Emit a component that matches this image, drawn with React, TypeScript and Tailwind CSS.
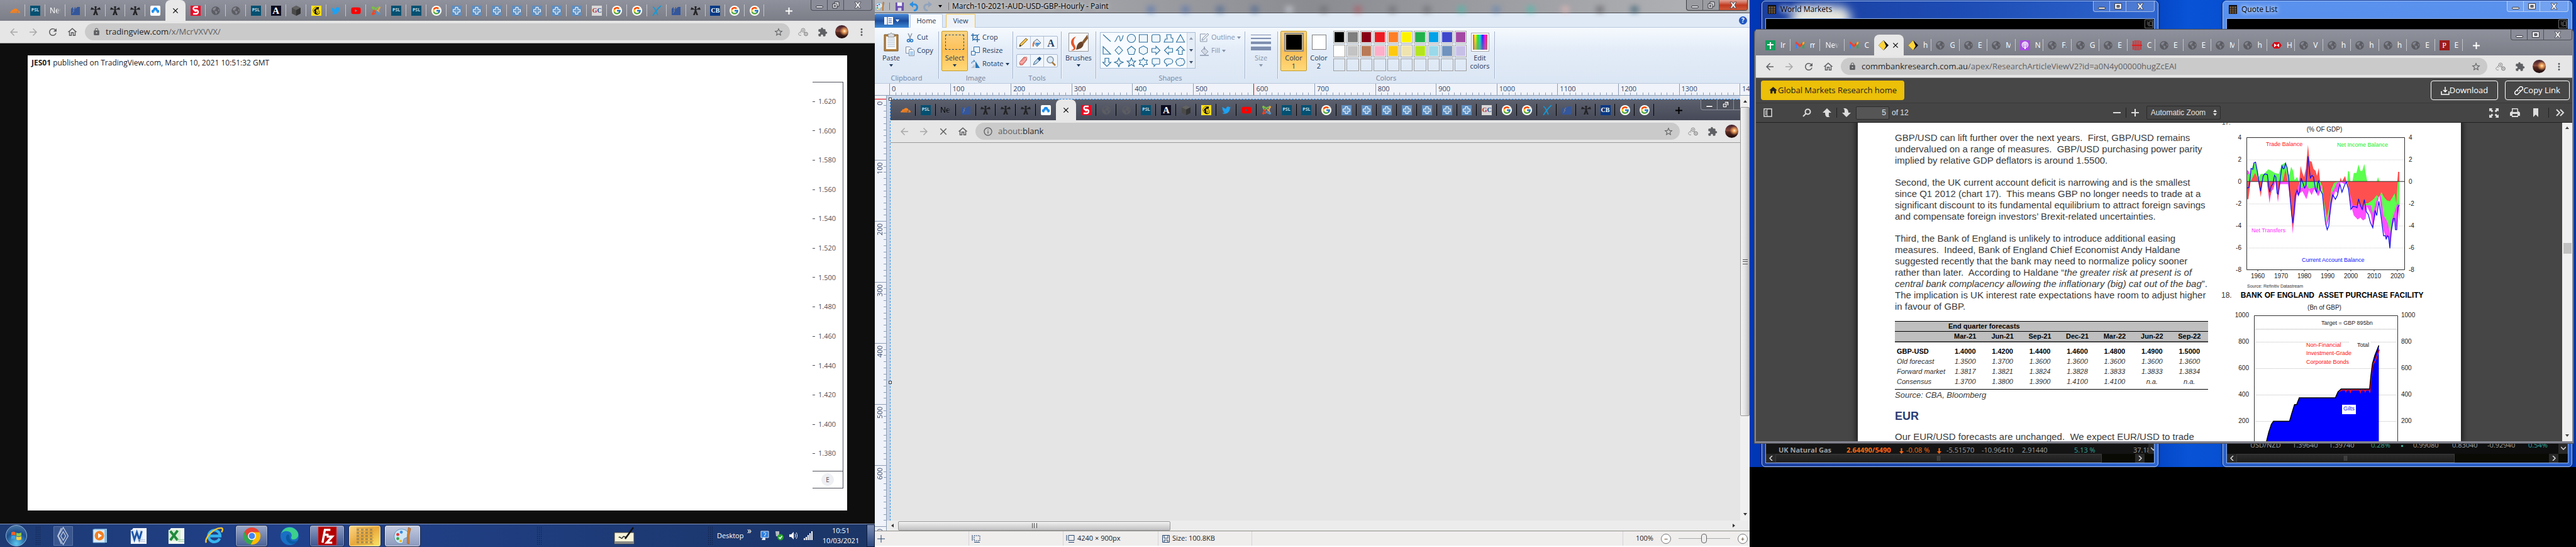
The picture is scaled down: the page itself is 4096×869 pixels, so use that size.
import React from "react";
import {
  MdArrowBack,
  MdArrowForward,
  MdRefresh,
  MdClose,
  MdOutlineHome,
  MdLock,
  MdStarBorder,
  MdExtension,
  MdMoreVert,
  MdInfoOutline,
  MdHome,
} from "react-icons/md";
import { FaTwitter, FaYoutube, FaJoomla, FaMailchimp, FaPodcast, FaGlobeAmericas } from "react-icons/fa";
import { FcGoogle } from "react-icons/fc";
import { SiCloudflare } from "react-icons/si";

const UI = "font-['Open_Sans','Noto_Sans',sans-serif]";

/* ---------- favicons ---------- */

function Favicon({ kind }: { kind: string }) {
  switch (kind) {
    case "cloudflare":
      return <SiCloudflare className="size-4 text-[#f48120]" />;
    case "psl":
      return (
        <span className="flex size-4 items-center justify-center bg-[#045071] text-[7px] font-bold text-[#c9d8e0]">PSL</span>
      );
    case "factory":
      return (
        <svg viewBox="0 0 16 16" className="size-4">
          <path d="M1 15V5l3-3v4l4-4v3l3-3h4v13z" fill="#34569b" />
          <path d="M3 12l3-4h-2l3-4" stroke="#7d8390" fill="none" />
        </svg>
      );
    case "cross":
      return (
        <svg viewBox="0 0 16 16" className="size-4">
          <path d="M6.300 1h3.400L8.800 6l5.700-3.500 1.500 4-6-.3-.8 1.300L12 15H9.200L8 11l-1.200 4H4l2.800-7.500L6 6.200l-6 .3 1.500-4L7.200 6z" fill="#232326" />
        </svg>
      );
    case "cloudup":
      return (
        <span className="flex size-4 items-center justify-center rounded-xs bg-white">
          <svg viewBox="0 0 16 16" className="size-3.5">
            <path d="M4 12a3 3 0 0 1 0-6 4 4 0 0 1 8 0 3 3 0 0 1 0 6h-1L8 8l-3 4z" fill="#1c8df0" />
            <path d="M5 11l3-4 3 4" stroke="#fff" fill="none" />
          </svg>
        </span>
      );
    case "scotia":
      return (
        <svg viewBox="0 0 16 16" className="size-4">
          <path d="M0 0h16v16H0z" fill="#ed0722" />
          <path d="M12 2H7a2.500 2.500 0 0 0 0 5h2a3 3 0 0 1 0 6H4" stroke="#fff" strokeWidth="2.400" fill="none" />
          <circle cx="8" cy="8" r="2" fill="#fff" />
        </svg>
      );
    case "globe":
      return <FaGlobeAmericas className="size-3.5 text-[#5c5d63]" />;
    case "a":
      return (
        <span className="flex size-4 items-center justify-center bg-[#0b0b20] font-['Liberation_Serif',serif] text-[15px] font-bold leading-4 text-white">
          A
        </span>
      );
    case "cube":
      return (
        <svg viewBox="0 0 16 16" className="size-4">
          <path d="M8 0l7 3.500v9L8 16l-7-3.500v-9z" fill="#4b4b4b" />
          <path d="M8 0l7 3.500L8 7 1 3.500z" fill="#626262" />
          <path d="M8 7l7-3.500v9L8 16z" fill="#333" />
        </svg>
      );
    case "chimp":
      return (
        <span className="flex size-4 items-center justify-center bg-[#ffe01b]">
          <FaMailchimp className="size-3.5 text-black" />
        </span>
      );
    case "twitter":
      return <FaTwitter className="size-3.5 text-[#1da1f2]" />;
    case "youtube":
      return <FaYoutube className="size-4 text-[#f00]" />;
    case "joomla":
      return (
        <span className="relative block size-4">
          <FaJoomla className="size-4 text-[#f9a541] [clip-path:polygon(50%_50%,100%_0,100%_100%)]" />
          <FaJoomla className="absolute inset-0 size-4 text-[#7ac143] [clip-path:polygon(0_0,100%_0,50%_50%,0_60%)]" />
          <FaJoomla className="absolute inset-0 size-4 text-[#f44321] [clip-path:polygon(0_40%,50%_50%,50%_100%,0_100%)]" />
          <FaJoomla className="absolute inset-0 size-4 text-[#5091cd] [clip-path:polygon(50%_50%,100%_80%,100%_100%,40%_100%)]" />
        </span>
      );
    case "google":
      return (
        <span className="flex size-4 items-center justify-center rounded-full bg-white">
          <FcGoogle className="size-3.5" />
        </span>
      );
    case "plus":
      return (
        <svg viewBox="0 0 16 16" className="size-4">
          <path d="M0 0h16v16H0z" fill="#5f8dbd" />
          <path d="M6 2.500h4V6h3.500v4H10v3.500H6V10H2.500V6H6z" fill="#6f9bc7" stroke="#fff" />
        </svg>
      );
    case "gc":
      return (
        <span className="flex size-4 items-center justify-center bg-[#d8d8d8] font-['Liberation_Serif',serif] text-[10px] font-bold text-[#c22b35]">
          G<span className="text-[#1f4f86]">C</span>
        </span>
      );
    case "x":
      return (
        <svg viewBox="0 0 16 16" className="size-4">
          <path d="M2 2c4 1 6 10 8 13M15 0C10 4 6 10 2 16" stroke="#1399d6" strokeWidth="1.800" fill="none" />
        </svg>
      );
    case "cb":
      return (
        <span className="flex size-4 items-center justify-center bg-[#0a3a86] font-['Liberation_Serif',serif] text-[10px] font-bold text-white">
          CB
        </span>
      );
    case "sheet":
      return (
        <svg viewBox="0 0 16 16" className="size-4">
          <rect width="16" height="16" rx="1" fill="#149e5c" />
          <path d="M8 3v11M3 7h10" stroke="#fff" strokeWidth="2" />
        </svg>
      );
    case "gmail":
      return (
        <svg viewBox="0 0 16 16" className="size-4">
          <path d="M1 4v9h3V6z" fill="#4285f4" />
          <path d="M15 4v9h-3V6z" fill="#34a853" />
          <path d="M1 3l1-1 6 5 6-5 1 1v2l-7 6-7-6z" fill="#ea4335" />
          <path d="M12 4l2-2 1 1v2l-3 3z" fill="#fbbc04" />
        </svg>
      );
    case "cba":
      return (
        <svg viewBox="0 0 16 16" className="size-4">
          <path d="M8 0l8 8-8 8-8-8z" fill="#000" />
          <path d="M8 0l4 9-4 7-8-8z" fill="#ffd43a" />
        </svg>
      );
    case "podcast":
      return (
        <span className="flex size-4 items-center justify-center bg-[#a84be0]">
          <FaPodcast className="size-3 text-white" />
        </span>
      );
    case "hatch":
      return (
        <svg viewBox="0 0 16 16" className="size-4">
          <path d="M2 1v14M5 0v16M8 0v16M11 0v16M14 1v14M0 8h16" stroke="#f01010" strokeWidth="1.300" />
        </svg>
      );
    case "hsbc":
      return (
        <svg viewBox="0 0 16 16" className="size-4">
          <path d="M4 3h8l4 5-4 5H4L0 8z" fill="#db0011" />
          <path d="M4 5l4 3-4 3zM12 5L8 8l4 3z" fill="#fff" />
        </svg>
      );
    case "pinterest":
      return (
        <span className="flex size-4 items-center justify-center bg-[#9c1c1c] font-['Liberation_Serif',serif] text-[12px] leading-4 text-white">
          P
        </span>
      );
    default:
      return null;
  }
}

/* ---------- shared browser chrome ---------- */

type TabInfo = { icon?: string; text?: string };

function Tab({ tab, active, line, dark }: { tab: TabInfo; active: boolean; line: boolean; dark: boolean }) {
  const wide = Boolean(tab.icon && tab.text);
  return (
    <button
      aria-label={tab.text || tab.icon || "Current tab"}
      className={
        "relative flex h-[33px] min-w-0 flex-1 basis-0 items-center overflow-hidden text-[12px] " +
        (active ? "rounded-t-lg bg-[#e8e8e8] text-black " : dark ? "text-black " : "text-white ") +
        (wide || (active && tab.icon) ? "gap-1 pl-[7px]" : "justify-center")
      }
    >
      {tab.icon && <Favicon kind={tab.icon} />}
      {tab.text && (
        <span
          className={
            wide
              ? "ml-1 w-2 overflow-hidden whitespace-nowrap text-left"
              : "w-[55%] overflow-hidden whitespace-nowrap text-left [mask-image:linear-gradient(90deg,black_60%,transparent)]"
          }
        >
          {tab.text}
        </span>
      )}
      {active && <MdClose className="size-3.5" />}
      {line && <span className={"absolute right-0 top-[7px] h-[19px] w-px " + (dark ? "bg-black" : "bg-[#c4c5cb]")} />}
    </button>
  );
}

function TabGroup({ tabs, active, dark = false }: { tabs: TabInfo[]; active: number; dark?: boolean }) {
  return (
    <>
      {tabs.map((t, i) => (
        <Tab key={i} tab={t} active={i === active} line={i !== active && i !== active - 1} dark={dark} />
      ))}
    </>
  );
}

function RestoreGlyph() {
  return (
    <svg viewBox="0 0 12 12" className="size-3">
      <path d="M4 1h7v7H8v3H1V4h3z" fill="#e4e4e8" stroke="#33343a" />
      <path d="M4 4h4v4M3.500 6.500h2v2h-2z" fill="none" stroke="#33343a" />
    </svg>
  );
}

function MaxGlyph() {
  return (
    <svg viewBox="0 0 12 12" className="size-3">
      <path d="M.5 1.500h11v9H.5z" fill="#e9e9ee" stroke="#3c3e46" />
      <path d="M4 4.500h4v3H4z" fill="#777" stroke="#3c3e46" />
    </svg>
  );
}

function WindowButtons({ tone, restore = false }: { tone: "gray" | "dark" | "paint" | "aero"; restore?: boolean }) {
  const shell =
    tone === "dark"
      ? "border-[#8b8e98] bg-[#50545f] divide-[#8b8e98]"
      : tone === "aero"
        ? "border-white/50 bg-white/15 divide-white/50"
        : tone === "paint"
          ? "border-[#3c3d42] bg-[#9b9ca1] divide-[#5a5b60]"
          : "border-[#4e5058] bg-[#8a8c97] divide-[#4e5058]";
  return (
    <div className={"flex h-[17px] divide-x overflow-hidden rounded-b-sm border border-t-0 " + shell}>
      <button aria-label="Minimize" className="flex w-[26px] items-center justify-center">
        <span className="mt-1.5 h-1 w-3 rounded-xs border border-[#3c3e46] bg-[#e9e9ee]" />
      </button>
      <button aria-label="Maximize" className="flex w-[26px] items-center justify-center">
        {restore ? <RestoreGlyph /> : <MaxGlyph />}
      </button>
      <button
        aria-label="Close"
        className={
          "flex w-[44px] items-center justify-center " +
          (tone === "paint" ? "bg-linear-to-b from-[#e0a498] via-[#c0391f] to-[#cf5a3c]" : "")
        }
      >
        <svg viewBox="0 0 12 12" className="size-3">
          <path d="M1 1h3l2 3 2-3h3L8 6l3 5H8L6 8l-2 3H1l3-5z" fill="#f2f2f4" stroke="#3c3e46" strokeWidth=".8" />
        </svg>
      </button>
    </div>
  );
}

function AddressBar({ stop = false, canBack = false, info = false, children, value }: {
  stop?: boolean;
  canBack?: boolean;
  info?: boolean;
  value: string;
  children: React.ReactNode;
}) {
  return (
    <div className="flex h-[36px] shrink-0 items-center border-b border-[#9a9a9a] bg-[#e6e6e6] px-1.5 text-[#5f6063]">
      <button aria-label="Back" className={"flex w-[31px] justify-center " + (canBack ? "text-[#5f6063]" : "text-[#a9a9a9]")}>
        <MdArrowBack className="size-[18px]" />
      </button>
      <button aria-label="Forward" className="flex w-[31px] justify-center text-[#a9a9a9]">
        <MdArrowForward className="size-[18px]" />
      </button>
      <button aria-label={stop ? "Stop" : "Reload"} className="flex w-[31px] justify-center">
        {stop ? <MdClose className="size-[18px]" /> : <MdRefresh className="size-[18px]" />}
      </button>
      <button aria-label="Home" className="flex w-[31px] justify-center">
        <MdOutlineHome className="size-[18px]" />
      </button>
      <div className="mx-[5px] flex h-[27px] min-w-0 flex-1 items-center rounded-full bg-[#cacaca] pl-3 pr-2.5">
        {info ? <MdInfoOutline className="size-4 shrink-0" /> : <MdLock className="size-[13px] shrink-0" />}
        <a href={value} className="ml-2 flex-1 truncate text-[13px] text-[#5f6063]">
          {children}
        </a>
        <button aria-label="Bookmark this page">
          <MdStarBorder className="size-4" />
        </button>
      </div>
      <button aria-label="Share extension" className="flex w-[31px] justify-center">
        <svg viewBox="0 0 16 16" className="size-4" fill="none" stroke="#8f8f8f">
          <circle cx="8" cy="5" r="3" />
          <circle cx="8" cy="5" r="1" />
          <circle cx="12.500" cy="11" r="2.800" stroke="#6e6e6e" />
          <circle cx="12.500" cy="11" r=".8" />
          <path d="M5 13c-3 1-5-1-4-3s3-2 4 0M3 8l2-2M9 8l2 1" />
        </svg>
      </button>
      <button aria-label="Extensions" className="flex w-[31px] justify-center">
        <MdExtension className="size-4" />
      </button>
      <button aria-label="Profile" className="flex w-[31px] justify-center">
        <span className="size-[21px] rounded-full bg-[radial-gradient(circle_at_70%_45%,#fff3d0_0,#f5a860_12%,transparent_40%),linear-gradient(#3b1c2c,#8a4a3c_45%,#5b2a20_55%,#180a0c)]" />
      </button>
      <button aria-label="Menu" className="flex w-[31px] justify-center">
        <MdMoreVert className="size-[18px]" />
      </button>
    </div>
  );
}

const mainTabs: TabInfo[] = [
  { icon: "cloudflare" }, { icon: "psl" }, { text: "New Tab" }, { icon: "factory" }, { icon: "cross" }, { icon: "cross" },
  { icon: "cross" }, { icon: "cloudup" }, {}, { icon: "scotia" }, { icon: "globe" }, { icon: "globe" }, { icon: "psl" },
  { icon: "a" }, { icon: "cube" }, { icon: "chimp" }, { icon: "twitter" }, { icon: "youtube" }, { icon: "joomla" },
  { icon: "psl" }, { icon: "psl" }, { icon: "google" }, { icon: "plus" }, { icon: "plus" }, { icon: "plus" },
  { icon: "plus" }, { icon: "plus" }, { icon: "plus" }, { icon: "plus" }, { icon: "gc" }, { icon: "google" }, { icon: "google" },
];
const tailTabs: TabInfo[] = [
  { icon: "x" }, { icon: "factory" }, { icon: "cross" }, { icon: "cb" }, { icon: "google" }, { icon: "google" },
];

function ChartBrowserHead({ dark = false, children }: { dark?: boolean; children: React.ReactNode }) {
  return (
    <>
      <div
        className={
          "flex h-[33px] shrink-0 items-start pl-2 " +
          (dark ? "bg-linear-to-b from-[#5c606d] to-[#464a58]" : "bg-linear-to-b from-[#8f919c] to-[#7b7d87]")
        }
      >
        <div className="flex flex-[1020_1_0%]">
          <TabGroup tabs={mainTabs} active={8} dark={dark} />
        </div>
        <div className="flex flex-[186_1_0%]">
          <TabGroup tabs={tailTabs} active={-1} dark={dark} />
        </div>
        <div className="flex w-[176px] justify-between pl-8 pr-1">
          <button aria-label="New tab" className={"mt-2.5 size-[15px] " + (dark ? "text-black" : "text-white")}>
            <svg viewBox="0 0 15 15" className="size-[15px]">
              <path d="M7.500 2v11M2 7.500h11" stroke="currentColor" strokeWidth="2" />
            </svg>
          </button>
          <WindowButtons tone={dark ? "dark" : "gray"} restore />
        </div>
      </div>
      {children}
    </>
  );
}

/* ---------- screen 1 ---------- */

const prices = ["1.620", "1.600", "1.580", "1.560", "1.540", "1.520", "1.500", "1.480", "1.460", "1.440", "1.420", "1.400", "1.380"];

function Grip() {
  return <span className="h-[30px] w-2 shrink-0 bg-[radial-gradient(#0b1533_1px,transparent_1px)] bg-[size:3px_3px]" />;
}

function TaskItem({ label, frame = "", children }: { label: string; frame?: string; children: React.ReactNode }) {
  return (
    <button aria-label={label} className="flex h-full w-[60px] shrink-0 items-center justify-center">
      <span className={"flex h-[35px] items-center justify-center " + frame}>{children}</span>
    </button>
  );
}

function Taskbar() {
  return (
    <footer className="flex h-[37px] shrink-0 items-center border-t border-[#8295bd] bg-linear-to-r from-[#1d3a73] via-[#21418c] via-35% to-[#1b3566] text-white">
      <button aria-label="Start" className="flex w-[52px] justify-center">
        <span className="flex size-[34px] items-center justify-center rounded-full border border-[#8fb4d8] bg-[radial-gradient(circle_at_50%_90%,#5cc8f0,#1d4f8d_55%,#5d86ad)]">
          <svg viewBox="0 0 20 20" className="size-5">
            <path d="M2 5c3-2 5-1 7 0v5c-2-1-4-2-7 0z" fill="#f0602c" />
            <path d="M10 5c3 2 5 1 8 0v5c-3 1-5 2-8 0z" fill="#8fc742" />
            <path d="M2 11c3-2 5-1 7 0v5c-2-1-4-2-7 0z" fill="#3fa0e6" />
            <path d="M10 11c3 2 5 1 8 0v5c-3 1-5 2-8 0z" fill="#fcd03c" />
          </svg>
        </span>
      </button>
      <span className="ml-1 mr-1.5 flex">
        <Grip />
      </span>
      <TaskItem label="Trading platform">
        <svg viewBox="0 0 32 32" className="size-[31px]">
          <path d="M.5.500h31v31H.5z" fill="#3a568f" stroke="#5d77a8" />
          <path d="M16 2l8 14-8 14-8-14zM16 9l-4 7 4 7 4-7zM13 3L7 16l6 13" fill="none" stroke="#b4c3dd" strokeWidth="1.500" />
        </svg>
      </TaskItem>
      <TaskItem label="Media Player">
        <svg viewBox="0 0 26 26" className="size-[26px]">
          <path d="M3 2h20v22H3z" fill="#8fc3ea" />
          <path d="M1 3h19v21H1z" fill="#d9ecf9" stroke="#6aa5d4" />
          <circle cx="11" cy="13" r="7.500" fill="#f28022" />
          <path d="M9 9l6 4-6 4z" fill="#fff" />
        </svg>
      </TaskItem>
      <TaskItem label="Word">
        <svg viewBox="0 0 30 30" className="size-[29px]">
          <path d="M6 2h22v26H2V8z" fill="#f3f6fb" />
          <path d="M2 5h20v18H2z" fill="#dfe9f7" />
          <path d="M4 7l4 14 4-12 4 12 4-14" stroke="#1d56a8" strokeWidth="3" fill="none" />
          <path d="M14 21h12M14 24h12" stroke="#a9bdd9" />
        </svg>
      </TaskItem>
      <TaskItem label="Excel">
        <svg viewBox="0 0 30 30" className="size-[29px]">
          <path d="M6 2h22v26H2V8z" fill="#f1f8f1" />
          <path d="M2 5h20v18H2z" fill="#d6ecd4" />
          <path d="M5 7l12 15M17 6L5 22" stroke="#1f8a3b" strokeWidth="4" fill="none" />
          <path d="M16 21h12M18 24h10" stroke="#8fc493" />
        </svg>
      </TaskItem>
      <TaskItem label="Internet Explorer">
        <svg viewBox="0 0 32 32" className="size-[31px]">
          <path d="M25 20a9.500 9.500 0 1 1 .8-4H8" fill="none" stroke="#35b4ee" strokeWidth="4.500" />
          <path d="M3 27C-1 20 16 2 28 3c3 1 2 4 0 7" fill="none" stroke="#f3c32c" strokeWidth="2.500" />
        </svg>
      </TaskItem>
      <TaskItem label="Chrome" frame="w-[52px] rounded-sm border border-[#142348] bg-linear-to-b from-[#9aa8c8] to-[#4c6296] ring-1 ring-inset ring-white/30">
        <svg viewBox="0 0 32 32" className="size-[29px]">
          <circle cx="16" cy="16" r="15" fill="#e94234" />
          <path d="M3 8.500A15 15 0 0 0 14 31l7-12-5-3-6 4z" fill="#34a853" />
          <path d="M14 31A15 15 0 0 0 29.500 9.500H16l6 7z" fill="#fbbc04" />
          <circle cx="16" cy="16" r="7" fill="#fff" />
          <circle cx="16" cy="16" r="5.500" fill="#4285f4" />
        </svg>
      </TaskItem>
      <TaskItem label="Edge">
        <svg viewBox="0 0 32 32" className="size-[31px]">
          <circle cx="16" cy="16" r="15" fill="#1a6fc4" />
          <path d="M2 13C5 3 15-1 24 4c8 5 8 14 2 17-4 2-9 0-7-4 2-5-3-9-8-9-4 0-8 2-9 5z" fill="#3ccf8e" />
          <path d="M11 15c-3 5 1 13 9 14 4 0 8-3 10-6-7 4-14 1-14-5 0-5-3-6-5-3z" fill="#0c59a4" />
        </svg>
      </TaskItem>
      <TaskItem label="FileZilla" frame="w-[56px] rounded-sm border border-[#142348] bg-linear-to-b from-[#8f9dc2] to-[#3d558f] ring-1 ring-inset ring-white/30">
        <svg viewBox="0 0 32 32" className="size-[31px]">
          <path d="M1 1h30v30H1z" fill="#b40000" stroke="#e04040" strokeDasharray="2 1" />
          <path d="M8 27l4-21h9M10 14h8M15 17h9l-9 10h9" fill="none" stroke="#fff" strokeWidth="3.500" />
        </svg>
      </TaskItem>
      <TaskItem label="Market data" frame="w-[52px] rounded-sm border border-[#142348] bg-linear-to-br from-[#fbd98a] via-[#e9a93a] to-[#fbe96a] ring-1 ring-inset ring-white/60">
        <span className="size-[27px] bg-[linear-gradient(#d9a040_2px,transparent_2px),linear-gradient(90deg,#8d7c55_4px,transparent_4px)] bg-[size:100%_5px,7px_100%] opacity-70" />
      </TaskItem>
      <TaskItem label="Paint" frame="w-[58px] rounded-sm border border-[#142348] bg-linear-to-b from-[#c3cbe0] to-[#8c99bd] ring-1 ring-inset ring-white/60">
        <PaletteIcon className="size-[30px]" />
      </TaskItem>

      <div className="ml-auto flex h-full items-center">
        <Grip />
        <div className="flex w-[264px] justify-center">
          <svg viewBox="0 0 34 28" className="h-[28px] w-[34px]">
            <path d="M1 9h31v18H1z" fill="#f6f3d8" stroke="#444" />
            <path d="M1 23h31v4H1z" fill="#8b8b86" />
            <path d="M8 17c2-3 4 4 6 0s3 0 5-1" stroke="#222" fill="none" strokeWidth="1.500" />
            <path d="M18 19L31 1" stroke="#111" strokeWidth="2.500" />
          </svg>
        </div>
        <Grip />
        <span className="ml-[7px] w-[48px] text-[11px]">Desktop</span>
        <button aria-label="More toolbars" className="mb-4 w-4 text-left text-[14px] leading-4">»</button>
        <div className="flex w-[92px] items-center justify-around">
          <svg viewBox="0 0 16 16" className="size-4">
            <path d="M2 1h12v10H2z" fill="#2d7fe0" stroke="#d8e8fb" />
            <path d="M5 11h4v4H3z" fill="#dfe6ee" />
            <path d="M6 4a2 2 0 1 1 2 3v2" stroke="#fff" fill="none" />
          </svg>
          <svg viewBox="0 0 16 16" className="size-4">
            <path d="M2 1h6v8H3z" fill="#b6bcc4" />
            <circle cx="10" cy="10.500" r="5" fill="#26a22e" />
            <path d="M7.500 10.500l2 2 3-4" stroke="#fff" strokeWidth="1.500" fill="none" />
          </svg>
          <svg viewBox="0 0 16 16" className="size-4">
            <path d="M1 6h3l4-4v12l-4-4H1z" fill="#fff" />
            <path d="M10 5c1 2 1 4 0 6M12 3c2 3 2 7 0 10" stroke="#fff" fill="none" />
          </svg>
          <svg viewBox="0 0 16 16" className="size-4">
            <path d="M1 12h2v3H1zM4 10h2v5H4zM7 7h2v8H7zM10 4h2v11h-2zM13 1h2v14h-2z" fill="#fff" />
          </svg>
        </div>
        <time className="w-[82px] text-center text-[11px] leading-4">
          10:51
          <br />
          10/03/2021
        </time>
        <button aria-label="Show desktop" className="h-full w-[13px] border border-[#0c1a3a] bg-linear-to-b from-[#7f90b6] to-[#2c477f]" />
      </div>
    </footer>
  );
}

function ScreenOne() {
  return (
    <section className="flex min-w-0 flex-col overflow-hidden bg-[#0e0e0e]">
      <ChartBrowserHead>
        <AddressBar value="#tradingview">
          <span className="text-[#26272a]">tradingview.com</span>/x/McrVXVVX/
        </AddressBar>
      </ChartBrowserHead>
      <main className="mx-11 mb-[21px] mt-[19px] flex min-h-0 flex-1 flex-col bg-white pb-[35px] pl-1.5 pr-[6px]">
        <p className="h-[42px] pt-1 text-[12px] leading-4 text-[#22242f]">
          <b>JES01</b> published on TradingView.com, March 10, 2021 10:51:32 GMT
        </p>
        <div className="ml-auto flex w-[49px] flex-1 flex-col border-y border-r border-[#50535e] text-[11px] text-[#50535e]">
          <ul className="flex flex-1 flex-col pb-1 pt-[7px]">
            {prices.map((p) => (
              <li key={p} className="flex flex-1 items-center gap-[5px]">
                <span className="h-px w-1 bg-[#50535e]" />
                {p}
              </li>
            ))}
          </ul>
          <div className="flex h-[27px] items-center justify-center border-t border-[#50535e]">
            <span className="flex size-5 items-center justify-center rounded-full bg-[#eeeff3] text-[10px]">E</span>
          </div>
        </div>
      </main>
      <Taskbar />
    </section>
  );
}

/* ---------- screen 2: paint ---------- */

function PaletteIcon({ className }: { className: string }) {
  return (
    <svg viewBox="0 0 32 32" className={className}>
      <path d="M14 5C6 5 1 12 2 19s7 12 13 10c4-2 1-6 4-8s7-1 7-7c0-5-5-9-12-9z" fill="#cfe6f5" stroke="#5b8fb8" />
      <circle cx="8" cy="14" r="2.500" fill="#e33" />
      <circle cx="14" cy="10" r="2.500" fill="#3b8be0" />
      <circle cx="8" cy="21" r="2.500" fill="#38a847" />
      <circle cx="13" cy="25" r="2.200" fill="#f2b61d" />
      <path d="M26 2l4 2-3 12v14l-3-1V15z" fill="#d9822b" stroke="#8a4a12" strokeWidth=".6" />
    </svg>
  );
}

function Caret({ className = "" }: { className?: string }) {
  return (
    <svg viewBox="0 0 6 4" className={"h-[4px] w-[6px] " + className}>
      <path d="M0 0h6L3 4z" fill="currentColor" />
    </svg>
  );
}

function Group({ label, width, children }: { label: string; width: string; children: React.ReactNode }) {
  return (
    <div className={"flex shrink-0 items-start " + width}>
      <div className="min-w-0 flex-1">
        <div className="flex h-[63px]">{children}</div>
        <p className="mt-[5px] text-center leading-[14px] text-[#75849d]">{label}</p>
      </div>
      <span className="mt-px h-[75px] w-px bg-[#a3b3cb] shadow-[1px_0_0_#f6f9fd]" />
    </div>
  );
}

function BigButton({ lines, arrow = false, on = false, muted = false, className, children }: {
  lines: string[];
  arrow?: boolean;
  on?: boolean;
  muted?: boolean;
  className: string;
  children: React.ReactNode;
}) {
  return (
    <button
      className={
        "flex h-[64px] shrink-0 flex-col items-center pt-[2px] " +
        (on ? "rounded-xs border border-[#c29b29] bg-linear-to-b from-[#fcd382] via-[#fdbf54] to-[#ffd978] " : "border border-transparent ") +
        (muted ? "text-[#8793a8] " : "text-[#1e395b] ") +
        className
      }
    >
      <span className="flex h-[30px] items-center justify-center">{children}</span>
      <span className="mt-[3px] block leading-[13px]">
        {lines.map((l) => (
          <span key={l} className="block">
            {l}
          </span>
        ))}
      </span>
      {arrow && <Caret className="mt-1 shrink-0" />}
    </button>
  );
}

function SmallButton({ label, arrow = false, muted = false, children }: { label: string; arrow?: boolean; muted?: boolean; children: React.ReactNode }) {
  return (
    <button className={"flex h-[21px] items-center gap-[3px] " + (muted ? "text-[#8793a8]" : "text-[#1e395b]")}>
      {children}
      <span>{label}</span>
      {arrow && <Caret />}
    </button>
  );
}

const shapePaths = [
  "M2 2l12 11", "M1 13c3 1 4-10 7-9s1 9 3 8 3-5 4-9", "M8 1.500a6.500 6.500 0 1 1-.01 0", "M1.500 2h13v12h-13z",
  "M4 2h8a2.500 2.500 0 0 1 2.500 2.500v7A2.500 2.500 0 0 1 12 14H4a2.500 2.500 0 0 1-2.500-2.500v-7A2.500 2.500 0 0 1 4 2z",
  "M5 2h7v5l3 1v6H1l2-5h3z", "M8 2l6.500 12h-13z",
  "M2 2l12 12H2z", "M8 1.500L14 8l-6 6.500L2 8z", "M8 1.500l6.500 5.200L12 14.500H4L1.500 6.700z", "M8 1l6.500 3.500v7L8 15l-6.500-3.500v-7z",
  "M1.500 5H8V1.500L14.500 8 8 14.500V11H1.500z", "M14.500 5H8V1.500L1.500 8 8 14.500V11h6.500z", "M5 14.500V8H1.500L8 1.500 14.500 8H11v6.500z",
  "M5 1.500V8H1.500L8 14.500 14.500 8H11V1.500z", "M8 1l2 5 5 2-5 2-2 5-2-5-5-2 5-2z", "M8 1l2 5h5l-4 3.500 1.500 5L8 11.500l-4.500 3 1.500-5L1 6h5z",
  "M8 1l2 3.500h4.500L12.500 8l2 3.500H10L8 15l-2-3.500H1.500l2-3.500-2-3.500H6z",
  "M3.500 2h9A1.500 1.500 0 0 1 14 3.500v6a1.500 1.500 0 0 1-1.500 1.500H8l-3 3.500V11H3.500A1.500 1.500 0 0 1 2 9.500v-6A1.500 1.500 0 0 1 3.500 2z",
  "M8 2c9 0 9 9 0 9l-3 3-.5-3.500C-1 8 1 2 8 2z",
  "M5 3c1-2 4-2 5-.5 2-1 4 .5 3.500 2.500 2 1 2 4 0 5 0 2-2 3-4 2.500-1 2-4 1.500-5 0-2 0-3-1-2.500-3C0 8 0 6 2 5c0-2 1-2.500 3-2z",
];

const palette = [
  "bg-black", "bg-[#7f7f7f]", "bg-[#880015]", "bg-[#ed1c24]", "bg-[#ff7f27]", "bg-[#fff200]", "bg-[#22b14c]", "bg-[#00a2e8]", "bg-[#3f48cc]", "bg-[#a349a4]",
  "bg-white", "bg-[#c3c3c3]", "bg-[#b97a57]", "bg-[#ffaec9]", "bg-[#ffc90e]", "bg-[#efe4b0]", "bg-[#b5e61d]", "bg-[#99d9ea]", "bg-[#7092be]", "bg-[#c8bfe7]",
  "", "", "", "", "", "", "", "", "", "",
];
const paletteNames = [
  "Black", "Gray", "Dark red", "Red", "Orange", "Yellow", "Green", "Turquoise", "Indigo", "Purple",
  "White", "Light gray", "Brown", "Rose", "Gold", "Light yellow", "Lime", "Light turquoise", "Blue-gray", "Lavender",
];

function ToolCell({ label, children }: { label: string; children: React.ReactNode }) {
  return (
    <button aria-label={label} className="flex flex-1 items-center justify-center">
      <svg viewBox="0 0 16 16" className="size-4">
        {children}
      </svg>
    </button>
  );
}

function Ribbon() {
  return (
    <div className="flex h-[89px] shrink-0 border-b border-[#b9c9de] bg-linear-to-b from-[#f6fafe] via-[#e3ecf8] via-40% to-[#dbe6f4] pt-[5px]">
      <Group label="Clipboard" width="w-[102px]">
        <BigButton lines={["Paste"]} arrow className="ml-1 w-11">
          <svg viewBox="0 0 24 30" className="h-[30px] w-6">
            <path d="M1 3h22v26H1z" fill="#b88442" stroke="#7a5424" />
            <path d="M4 6h16v20H4z" fill="#fbfcfd" />
            <path d="M6 10h12M6 13h12M6 16h12M6 19h12M6 22h12" stroke="#9fb6cc" />
            <path d="M7 2h3l2-2 2 2h3v5H7z" fill="#d9dde2" stroke="#666" strokeWidth=".7" />
          </svg>
        </BigButton>
        <div className="flex flex-col">
          <SmallButton label="Cut">
            <svg viewBox="0 0 16 16" className="size-4">
              <path d="M5 1l4 9M11 1L7 10" stroke="#8a98a8" strokeWidth="1.500" />
              <circle cx="5.500" cy="12.500" r="2" fill="none" stroke="#2272c4" strokeWidth="1.500" />
              <circle cx="10.500" cy="12.500" r="2" fill="none" stroke="#2272c4" strokeWidth="1.500" />
            </svg>
          </SmallButton>
          <SmallButton label="Copy">
            <svg viewBox="0 0 16 16" className="size-4" fill="#fff" stroke="#7b8ca3">
              <path d="M1.500 1.500h6l2 2v8h-8z" />
              <path d="M6.500 5.500h6l2 2v8h-8z" />
              <path d="M8 9.500h5M8 11.500h5M8 13.500h5" stroke="#5aa0dd" />
            </svg>
          </SmallButton>
        </div>
      </Group>
      <Group label="Image" width="w-[118px]">
        <BigButton lines={["Select"]} arrow on className="ml-1 w-[42px]">
          <span className="h-6 w-[30px] border border-dashed border-[#1d4f7c]" />
        </BigButton>
        <div className="ml-1 flex flex-col">
          <SmallButton label="Crop">
            <svg viewBox="0 0 16 16" className="size-4" fill="none" stroke="#2a6da8">
              <path d="M4 1v10h11M1 4h10v11" strokeWidth="1.500" />
              <path d="M3 13L14 2" />
            </svg>
          </SmallButton>
          <SmallButton label="Resize">
            <svg viewBox="0 0 16 16" className="size-4" fill="#eaf4fd" stroke="#2a6da8">
              <path d="M5.500 1.500h9v9h-9z" />
              <path d="M1.500 8.500h6v6h-6z" />
            </svg>
          </SmallButton>
          <SmallButton label="Rotate" arrow>
            <svg viewBox="0 0 16 16" className="size-4">
              <path d="M8 14V3l7 11z" fill="#2a78b8" />
              <path d="M7 14V8l-6 6z" fill="#b8c4d0" />
              <path d="M2 7c0-3 2-4 4-4M5 1l2 2-2 2" stroke="#2a78b8" fill="none" />
            </svg>
          </SmallButton>
        </div>
      </Group>
      <Group label="Tools" width="w-[77px]">
        <div className="flex flex-1 flex-col gap-2 pl-[5px] pr-[5px] pt-2">
          <div className="flex h-[21px] divide-x divide-[#b4c3da] rounded-xs border border-[#a9b9d2] bg-[#f1f6fc]">
            <ToolCell label="Pencil">
              <path d="M2 14l1-4L12 1l3 2-9 9z" fill="#f5c451" stroke="#7a5a1e" />
              <path d="M2 14l1-3 2 2z" fill="#222" />
            </ToolCell>
            <ToolCell label="Fill with color">
              <path d="M2 7l6-5 6 6-6 6z" fill="#dde6ee" stroke="#5c6c80" />
              <path d="M1 14C0 9 2 6 4 7l-1 3c0 3 0 5-2 4z" fill="#e8692c" />
              <path d="M5 8h8l-5 5z" fill="#3c90d8" />
            </ToolCell>
            <ToolCell label="Text">
              <text x="8" y="14" textAnchor="middle" fontSize="16" fontWeight="700" fontFamily="Liberation Serif, serif" fill="#1e3f63">
                A
              </text>
            </ToolCell>
          </div>
          <div className="flex h-[21px] divide-x divide-[#b4c3da] rounded-xs border border-[#a9b9d2] bg-[#f1f6fc]">
            <ToolCell label="Eraser">
              <path d="M2 10l7-8h5l-1 5-6 7H3z" fill="#f0938f" stroke="#b8504e" />
              <path d="M2 10h5l7-8" stroke="#fbd0cd" fill="none" />
            </ToolCell>
            <ToolCell label="Color picker">
              <path d="M2 14l2-5 5-5 3 3-5 5z" fill="#bcd5ea" stroke="#4d6d8d" />
              <path d="M8 4l4-3 3 3-3 4z" fill="#1d4f86" />
            </ToolCell>
            <ToolCell label="Magnifier">
              <circle cx="7" cy="6" r="5" fill="#dcebf7" stroke="#8595a5" strokeWidth="1.500" />
              <path d="M10 10l5 5" stroke="#a8793c" strokeWidth="2.500" />
            </ToolCell>
          </div>
        </div>
      </Group>
      <Group label="" width="w-[55px]">
        <BigButton lines={["Brushes"]} arrow className="w-[54px]">
          <svg viewBox="0 0 32 30" className="h-[30px] w-8">
            <path d="M.5.500h31v29H.5z" fill="#f8f9fa" stroke="#9b9b9b" />
            <path d="M12 6C4 8 2 16 6 21s2 5-2 7c8 1 8-4 6-8-3-5-2-10 2-14z" fill="#e4572b" />
            <path d="M30 3L21 15l3 3 7-9z" fill="#8a5a32" />
            <path d="M21 14c-6 1-8 6-9 13 6-1 11-3 12-9z" fill="#6b442a" />
          </svg>
        </BigButton>
      </Group>
      <Group label="Shapes" width="w-[237px]">
        <div className="ml-1.5 mt-0.5 flex h-[58px] w-[152px] border border-[#a9bfd8] bg-[#f7fbff]">
          <div className="grid flex-1 grid-cols-7">
            {shapePaths.map((d, i) => (
              <button key={i} aria-label={"Shape " + (i + 1)} className="flex items-center justify-center">
                <svg viewBox="0 0 16 16" className="size-4">
                  <path d={d} fill={i < 2 ? "none" : "#eef7fd"} stroke="#2b6f9e" strokeWidth="1.100" />
                </svg>
              </button>
            ))}
          </div>
          <div className="flex w-[13px] flex-col items-center justify-around border-l border-[#c3d1e2] bg-[#e5edf7] text-[#3c4f6a]">
            <Caret className="rotate-180 opacity-50" />
            <Caret />
            <Caret />
          </div>
        </div>
        <div className="ml-1.5 flex flex-col">
          <SmallButton label="Outline" arrow muted>
            <svg viewBox="0 0 16 16" className="size-4" fill="none" stroke="#8b97aa">
              <path d="M10 2H1.500v12H12V9" />
              <path d="M4 12l1-3 8-8 2 2-8 8z" fill="#e6ebf2" />
            </svg>
          </SmallButton>
          <SmallButton label="Fill" arrow muted>
            <svg viewBox="0 0 16 16" className="size-4">
              <path d="M3 8l5-5 6 6-5 5z" fill="#d3dae5" stroke="#8b97aa" />
              <path d="M8 6V1M1 15h14" stroke="#8b97aa" strokeWidth="1.500" />
            </svg>
          </SmallButton>
        </div>
      </Group>
      <Group label="" width="w-[52px]">
        <BigButton lines={["Size"]} arrow muted className="w-[50px]">
          <span className="flex w-8 flex-col gap-1">
            <span className="h-px bg-[#7f8fb0]" />
            <span className="h-0.5 bg-[#7f8fb0]" />
            <span className="h-1 bg-[#7f8fb0]" />
            <span className="h-1.5 bg-[#7f8fb0]" />
          </span>
        </BigButton>
      </Group>
      <Group label="Colors" width="w-[345px]">
        <BigButton lines={["Color", "1"]} on className="ml-1 w-[42px]">
          <span className="h-[30px] w-[31px] border-2 border-[#8b8b8b] bg-black ring-1 ring-inset ring-[#f3d692]" />
        </BigButton>
        <BigButton lines={["Color", "2"]} className="w-[38px]">
          <span className="h-6 w-[23px] border border-[#808080] bg-white" />
        </BigButton>
        <div className="ml-1 grid w-[212px] grid-cols-10 gap-0.5">
          {palette.map((c, i) => (
            <button key={i} aria-label={paletteNames[i] ?? "Custom color " + (i - 19)} className="h-[20px] border border-[#a0a0a0] p-px">
              <span className={"block h-full " + c + (c ? " ring-1 ring-white" : "")} />
            </button>
          ))}
        </div>
        <BigButton lines={["Edit", "colors"]} className="w-[42px]">
          <span className="h-[28px] w-[27px] border-2 border-white bg-[linear-gradient(transparent,#8888_90%),linear-gradient(90deg,#f33,#ff0,#2e2,#0dd,#22f,#f0f,#f33)] outline outline-[#a9a9a9]" />
        </BigButton>
      </Group>
    </div>
  );
}

const rulerMarks = [0, 100, 200, 300, 400, 500, 600, 700, 800, 900, 1000, 1100, 1200, 1300];
const ten = Array.from({ length: 10 }, (_, i) => i);

function HorizontalRuler() {
  return (
    <div className="relative flex h-[19px] shrink-0 overflow-hidden border-b border-[#8c9db5] bg-[#f0f3f9] pl-[23px] text-[11px] text-[#33466b]">
      <div className="flex w-[1352px] shrink-0">
        {rulerMarks.map((m) => (
          <div key={m} className="relative flex flex-1 items-end border-l border-[#8c9db5]">
            {ten.map((t) => (
              <span key={t} className={"h-1 flex-1 " + (t ? "border-l border-[#8c9db5]" : "")} />
            ))}
            <span className="absolute left-[3px] top-0 leading-[15px]">{m}</span>
          </div>
        ))}
      </div>
      <span className="border-l border-[#8c9db5] pl-[3px] leading-[15px]">1400</span>
      <span className="absolute bottom-0 left-[602px] top-0 w-px bg-red-600" />
    </div>
  );
}

function VerticalRuler() {
  return (
    <div className="flex w-[19px] shrink-0 flex-col overflow-hidden border-r border-[#8c9db5] bg-[#f0f3f9] pt-[5px] text-[11px] text-[#33466b]">
      {rulerMarks.slice(0, 8).map((m) => (
        <div key={m} className={"relative flex h-[97px] shrink-0 flex-col items-end border-t " + (m ? "border-[#8c9db5]" : "border-red-600")}>
          {ten.map((t) => (
            <span key={t} className={"w-1 flex-1 " + (t ? "border-t border-[#8c9db5]" : "")} />
          ))}
          <span className="absolute left-0 top-[3px] rotate-180 leading-[15px] [writing-mode:vertical-rl]">{m}</span>
        </div>
      ))}
    </div>
  );
}

function PaintWindow() {
  return (
    <section className={"flex min-w-0 flex-col overflow-hidden bg-[#f0eded] text-[11px] " + UI}>
      <header className="flex h-[21px] shrink-0 items-start justify-between border-b border-[#4a4b50] bg-linear-to-r from-[#b9babd] via-[#8b8c92] to-[#b5b6b9] pl-0 pr-[3px]">
        <div className="flex h-5 items-center">
          <PaletteIcon className="size-4" />
          <span className="mx-[7px] h-3 w-px bg-[#777]" />
          <button aria-label="Save" className="mr-1.5 flex w-4 justify-center">
            <svg viewBox="0 0 16 16" className="size-[15px]">
              <path d="M1 1h14v14H1z" fill="#6a4fae" />
              <path d="M4 1h8v6H4z" fill="#f1f1f7" />
              <path d="M5 10h6v5H5z" fill="#d6d2ea" />
            </svg>
          </button>
          <button aria-label="Undo" className="mr-1 flex w-[18px] justify-center">
            <svg viewBox="0 0 16 16" className="size-4">
              <path d="M2 5h7c6 0 6 9-1 10" stroke="#2e8fe0" strokeWidth="3" fill="none" />
              <path d="M7 0v10L1 5z" fill="#2e8fe0" />
            </svg>
          </button>
          <button aria-label="Redo" className="mr-1 flex w-[18px] justify-center">
            <svg viewBox="0 0 16 16" className="size-4">
              <path d="M14 5H7C1 5 1 14 8 15" stroke="#91a3bd" strokeWidth="3" fill="none" />
              <path d="M9 0v10l6-5z" fill="#91a3bd" />
            </svg>
          </button>
          <Caret className="mx-1" />
          <span className="ml-1.5 mr-[5px] h-3 w-px bg-[#777]" />
          <h1 className="rounded-full text-[12px] text-black [text-shadow:0_0_6px_white]">March-10-2021-AUD-USD-GBP-Hourly - Paint</h1>
        </div>
        <div aria-hidden="true" className="flex h-5 flex-1 items-end justify-around overflow-hidden pl-10 opacity-60 blur-xs">
          <span className="h-2.5 w-3 bg-[#4a6fb5]" />
          <span className="h-2.5 w-3 bg-[#4a6fb5]" />
          <span className="h-2.5 w-3 bg-[#3d5f92]" />
          <span className="h-2.5 w-3 bg-[#3d5f92]" />
          <span className="h-2.5 w-3 bg-[#d5dbe2]" />
          <span className="h-2.5 w-3 bg-[#65666c]" />
          <span className="h-2.5 w-3 bg-[#b8525a]" />
          <span className="h-2.5 w-3 bg-[#65666c]" />
          <span className="h-2.5 w-3 bg-[#65666c]" />
          <span className="h-2.5 w-3 bg-[#39c3ae]" />
          <span className="h-2.5 w-3 bg-[#5a83b5]" />
          <span className="h-2.5 w-3 bg-[#39c3ae]" />
          <span className="h-2.5 w-3 bg-[#f1bcbc]" />
          <span className="h-2.5 w-3 bg-[#55565b]" />
          <span className="h-2.5 w-3 bg-[#1f5068]" />
          <span className="h-2.5 w-3" />
        </div>
        <WindowButtons tone="paint" restore />
      </header>

      <nav className="flex h-[23px] shrink-0 items-end bg-[#dfe9f5] pr-1 text-[#1e395b] shadow-[inset_0_-1px_0_#b9c9de]">
        <button aria-label="Paint menu" className="mr-[2px] flex h-[22px] w-[54px] items-center justify-center gap-1 rounded-t-xs bg-linear-to-b from-[#4a8ad8] via-[#1c4b9c] to-[#3f8bd8] text-white">
          <svg viewBox="0 0 14 12" className="h-3 w-3.5">
            <path d="M0 0h14v12H0z" fill="#fff" />
            <path d="M5 0v12M7 3h5M7 6h5M7 9h5" stroke="#1c4b9c" />
          </svg>
          <Caret />
        </button>
        <button className="h-[22px] w-[52px] rounded-t-xs border border-b-0 border-[#b9c9de] bg-[#f8fbfe]">Home</button>
        <button className="ml-[5px] h-[22px] w-[47px] rounded-t-xs border border-b-0 border-[#f0c04a] bg-[#eff3f9]">View</button>
        <button aria-label="Help" className="mb-[5px] ml-auto flex size-[13px] items-center justify-center rounded-full bg-[#2257c4] text-[10px] font-bold text-white">
          ?
        </button>
      </nav>

      <Ribbon />
      <HorizontalRuler />

      <div className="flex min-h-0 flex-1">
        <VerticalRuler />
        <div className="flex min-w-0 flex-1 flex-col">
          <div className="flex min-h-0 flex-1">
            <div className="min-w-0 flex-1 overflow-hidden bg-[#c8d3e6] pl-[5px] pt-[5px]">
              <div className="relative flex h-full w-[1391px] flex-col border-l border-t border-dashed border-[#2b8ff0] bg-[#e5e5e5]">
                <ChartBrowserHead dark>
                  <AddressBar value="#blank" stop info>
                    about:<span className="text-[#26272a]">blank</span>
                  </AddressBar>
                </ChartBrowserHead>
                <span className="absolute -left-[3px] -top-[3px] size-[5px] border border-[#444] bg-white" />
                <span className="absolute -left-[3px] top-1/2 mt-28 size-[5px] border border-[#444] bg-white" />
              </div>
            </div>
            <div className="flex w-[15px] shrink-0 flex-col items-center bg-[#f0f0f0] text-[#333]">
              <Caret className="my-[7px] shrink-0 rotate-180" />
              <div className="flex w-full flex-[491_1_0%] items-center justify-center rounded-xs border border-[#999] bg-linear-to-r from-[#f4f4f4] via-[#e2e2e4] to-[#bdbdc1]">
                <span className="h-2 w-2 border-y border-[#555] bg-[linear-gradient(transparent_2px,#555_2px,#555_3px,transparent_3px)]" />
              </div>
              <div className="flex-[150_1_0%]" />
              <Caret className="mb-[8px] mt-1 shrink-0" />
            </div>
          </div>
          <div className="flex h-4 shrink-0 items-center bg-[#ececec] text-[#333]">
            <Caret className="mx-[6px] rotate-90" />
            <div className="flex h-[15px] flex-[433_1_0%] items-center justify-center rounded-xs border border-[#999] bg-linear-to-b from-[#f2f2f2] to-[#c0c0c2]">
              <span className="h-2 w-2 border-x border-[#555] bg-[linear-gradient(90deg,transparent_2px,#555_2px,#555_3px,transparent_3px)]" />
            </div>
            <div className="flex-[890_1_0%]" />
            <Caret className="mx-[6px] -rotate-90" />
            <span className="w-4" />
          </div>
        </div>
      </div>

      <footer className="flex h-[26px] shrink-0 items-stretch divide-x divide-[#d5d3d5] border-b-2 border-t border-b-white border-t-[#8e8e88] text-[#222]">
        <span className="flex w-[150px] items-center pl-1">
          <svg viewBox="0 0 12 12" className="size-3" stroke="#24466f" fill="none">
            <path d="M6 0v12M0 6h12" />
          </svg>
        </span>
        <span className="flex w-[150px] items-center pl-1">
          <svg viewBox="0 0 14 12" className="h-3 w-3.5" stroke="#24466f" fill="none">
            <path d="M4 1h9v8H4z" strokeDasharray="2 1" />
            <path d="M1 0v9M4 11.500h9" />
          </svg>
        </span>
        <span className="flex w-[151px] items-center gap-1 whitespace-nowrap pl-1">
          <svg viewBox="0 0 14 12" className="h-3 w-3.5 shrink-0" stroke="#24466f" fill="none">
            <path d="M4 .5h9v8H4zM1 0v9M4 11.500h9" />
          </svg>
          4240 × 900px
        </span>
        <span className="flex w-[149px] items-center gap-1 whitespace-nowrap pl-1.5">
          <svg viewBox="0 0 12 12" className="size-3 shrink-0" stroke="#24466f" fill="none">
            <path d="M.5.500h11v11H.5zM3 1v4h6V1M3 11V8h6v3" />
          </svg>
          Size: 100.8KB
        </span>
        <span className="flex-1" />
        <div className="flex w-[201px] items-center justify-between pl-[20px] pr-[3px]">
          <span>100%</span>
          <button aria-label="Zoom out" className="flex size-4 items-center justify-center rounded-full border border-[#777] bg-white leading-none">
            −
          </button>
          <input
            type="range"
            aria-label="Zoom"
            defaultValue={50}
            className="h-4 w-[82px] appearance-none bg-[linear-gradient(#aaa,#aaa)] bg-[size:100%_1px] bg-center bg-no-repeat [&::-webkit-slider-thumb]:h-[15px] [&::-webkit-slider-thumb]:w-[9px] [&::-webkit-slider-thumb]:appearance-none [&::-webkit-slider-thumb]:rounded-sm [&::-webkit-slider-thumb]:border [&::-webkit-slider-thumb]:border-solid [&::-webkit-slider-thumb]:border-[#666] [&::-webkit-slider-thumb]:bg-[#eee]"
          />
          <button aria-label="Zoom in" className="flex size-4 items-center justify-center rounded-full border border-[#777] bg-white leading-none">
            +
          </button>
        </div>
      </footer>
    </section>
  );
}

/* ---------- screen 3 ---------- */

const researchTabs: TabInfo[] = [
  { icon: "sheet", text: "In" }, { icon: "gmail", text: "m" }, { text: "New Tab" }, { icon: "gmail", text: "C" }, { icon: "cba" },
];
const researchTabsRest: TabInfo[] = [
  { icon: "cba", text: "h" }, { icon: "globe", text: "G" }, { icon: "globe", text: "E" }, { icon: "globe", text: "M" },
  { icon: "podcast", text: "N" }, { icon: "globe", text: "F." }, { icon: "globe", text: "G" }, { icon: "globe", text: "E" },
  { icon: "hatch", text: "C" }, { icon: "globe", text: "E" }, { icon: "globe", text: "E" }, { icon: "globe", text: "M" },
  { icon: "globe", text: "h" }, { icon: "hsbc", text: "H" }, { icon: "globe", text: "V" }, { icon: "globe", text: "h" },
  { icon: "globe", text: "h" }, { icon: "globe", text: "h" }, { icon: "globe", text: "E" }, { icon: "pinterest", text: "E" },
];

const quarters = ["Mar-21", "Jun-21", "Sep-21", "Dec-21", "Mar-22", "Jun-22", "Sep-22"];
const forecasts: [string, string[]][] = [
  ["GBP-USD", ["1.4000", "1.4200", "1.4400", "1.4600", "1.4800", "1.4900", "1.5000"]],
  ["Old forecast", ["1.3500", "1.3700", "1.3600", "1.3600", "1.3600", "1.3600", "1.3600"]],
  ["Forward market", ["1.3817", "1.3821", "1.3824", "1.3828", "1.3833", "1.3833", "1.3834"]],
  ["Consensus", ["1.3700", "1.3800", "1.3900", "1.4100", "1.4100", "n.a.", "n.a."]],
];

function ForecastTable() {
  return (
    <table className="mt-[14px] w-[498px] table-fixed border-collapse border-b border-black text-[11px] leading-4 text-black">
      <colgroup>
        <col className="w-[82px]" />
      </colgroup>
      <thead className="bg-[#bfbfbf]">
        <tr className="border-y border-black">
          <td className="p-0" />
          <th colSpan={7} className="p-0 pl-[3px] text-left text-[11px] leading-[15px]">
            End quarter forecasts
          </th>
        </tr>
        <tr className="border-b-2 border-[#444]">
          <td className="p-0" />
          {quarters.map((q) => (
            <th key={q} className="p-0 text-center text-[11px] leading-[15px]">
              {q}
            </th>
          ))}
        </tr>
      </thead>
      <tbody className="before:block before:h-1.5 last:after:block last:after:h-1">
        {forecasts.map(([name, values], r) => (
          <tr key={name} className={r ? "italic text-[#333]" : "font-bold"}>
            <th scope="row" className={"p-0 pl-[3px] text-left " + (r ? "font-normal" : "font-bold")}>
              {name}
            </th>
            {values.map((v, i) => (
              <td key={i} className="p-0 text-center">
                {v}
              </td>
            ))}
          </tr>
        ))}
      </tbody>
    </table>
  );
}

const SANS = "Liberation Sans, Arial, sans-serif";

function AccountChart() {
  const rows = [4, 2, 0, -2, -4, -6, -8];
  const years = [1960, 1970, 1980, 1990, 2000, 2010, 2020];
  return (
    <svg viewBox="0 0 310 267" className="block h-[267px] w-[310px]" fontFamily={SANS} fontSize="10">
      <text x="1" y="4" fill="#333">17.</text>
      <text x="164" y="15" textAnchor="middle" fontSize="10" fill="#222">(% OF GDP)</text>
      {rows.map((r, i) => (
        <g key={r}>
          <path d={`M40 ${25 + i * 35}H291`} stroke="#c9c9c9" strokeDasharray="1 1" />
          <text x="32" y={28 + i * 35} textAnchor="end" fill="#222">{r}</text>
          <text x="298" y={28 + i * 35} fill="#222">{r}</text>
        </g>
      ))}
      <g transform="translate(-93 -193) scale(.4189 .322)">
        <path
          fill="#ff4eff"
          d="M318 892V835l7 5 5 15 5 37h30l7 68 6-68h17l10 108 7-60 8-10 8-40 9 105 8-90h30l10 95 8 150 7-90 8-100 12-10 10-10 15 40 10-45 10 25 10-30 15 35 15-45 7 80 10 110 13-50 10-80 10-40 10 10 10-55 15 10 15-10 7 105 13 60 15 20 10-10 10 15 10-10 5-60 15 40 7 65 11-65 14-100 8 110 8 70 10 35 7-5 7 55 8-105 10-35 6 55 6-110 6 60V892z"
        />
        <path
          fill="#5cff4e"
          d="M318 892l2-32 13-10 7-30 8-20 8 20 8 50 8-15h13l15-23 10 6 15 12 15 5 12-45 14-12 8 52 6 10 7-40 8 20 5 45 10-15 6 22zM700 892l3-52 5 5 4 47h8l5-42h10l8-42 7 32h7l8-35 5 45 6 42h36l5-22 5 22zM515 892l10 33 10-5 10-15 10 25 10-5 15-5 10 20 10-35 12 105 10 80 10-50 8-90 10-20 10-30 10-8zM708 892l7 88 15 20 30 10 20 0 10 0 7 40 13-60 12-40 8 20 8 90 10 20 7 20 7 50 8-70 10-40 10-40 8 10V892z"
        />
        <path
          fill="#ff5050"
          d="M333 892l7-17 10-25 8 20 6 22zM455 892l11-62 8 62zM518 892l5-77 7 35 6 20 7-40 8-118 6 78 8 5 7 35 8 10 5 25 7-40 5 67zM672 892l3-19 5 19 12-27 5 27zM890 892l3-47h5v47zM318 892v88h7l8-88zM362 892l10 78 6-78zM395 892l10 88 10-50 7-38zM430 892l7 93 6-93zM476 892l8 98 9 140 7-130 8-60 12-48zM597 892l8 23 7 75 10 80 10-50 8-90 10-30 15-8zM700 892l12 68 10 50h13l10-10 12 20 11-20h10l12-10 10-10 12-20 8 10 10-25 10 25 10 15 12 5 10-20 8-20 6 50 6-108z"
        />
        <path d="M318 892H918" stroke="#333" vectorEffect="non-scaling-stroke" />
        <path
          fill="none"
          stroke="#1212f0"
          strokeWidth="1.300"
          vectorEffect="non-scaling-stroke"
          d="M318 925L327 922 330 892 335 828 342 832 346 800 352 797 357 830 362 870 367 910 371 940 376 905 381 865 387 855 397 858 402 915 406 945 411 915 418 905 424 862 429 870 434 950 438 955 444 900 452 815 457 830 461 828 466 803 472 825 478 880 484 985 489 1050 494 1098 498 1050 503 960 510 935 515 960 520 940 525 875 532 900 538 925 543 915 547 850 551 768 556 830 560 875 566 862 572 870 580 935 584 945 588 900 592 890 597 930 606 955 612 1030 618 1100 624 1130 630 1110 638 1000 645 958 655 980 663 960 672 905 680 945 690 910 697 895 705 930 714 1030 722 1015 733 1018 737 1022 743 978 750 1010 757 1030 765 982 772 1040 780 1055 788 1095 797 1120 806 1035 812 1060 820 990 827 1050 833 1110 838 1160 845 1160 848 1178 852 1160 857 1165 862 1222 867 1140 875 1075 880 1075 883 1130 888 1130 892 1020 898 1008"
        />
      </g>
      <path d="M40.500 24.500H291.500V234.500H40.500z" fill="none" stroke="#333" />
      {years.map((y, i) => (
        <g key={y}>
          <path d={`M${58 + i * 37} 235v2`} stroke="#333" />
          <text x={58 + i * 37} y="248" textAnchor="middle" fill="#222">{y}</text>
        </g>
      ))}
      <g fontSize="9">
        <text x="71" y="38" fill="#ff2020">Trade Balance</text>
        <text x="184" y="39" fill="#20f020">Net Income Balance</text>
        <text x="48" y="175" fill="#ff30ff">Net Transfers</text>
        <text x="128" y="222" fill="#1010ff">Current Account Balance</text>
      </g>
      <text x="41" y="263" fontSize="7" fill="#333">Source: Refinitiv Datastream</text>
    </svg>
  );
}

function FacilityChart() {
  const rows = [1000, 800, 600, 400, 200];
  return (
    <svg viewBox="0 6 310 225" className="block h-[225px] w-[310px]" fontFamily={SANS} fontSize="10">
      <text x="164" y="21" textAnchor="middle" fill="#222">(Bn of GBP)</text>
      {rows.map((r, i) => (
        <g key={r}>
          <path d={`M52 ${30.5 + i * 42}H280`} stroke="#bdbdbd" strokeDasharray="1 1" />
          <text x="44" y={33 + i * 42} textAnchor="end" fill="#222">{r}</text>
          <text x="286" y={33 + i * 42} fill="#222">{r}</text>
        </g>
      ))}
      <path d="M52 52H280" stroke="#999" strokeDasharray="1 1" />
      <g transform="translate(-93 -35.300) scale(.4189 .322)">
        <path d="M393 828L402 780 412 740 420 725H481L490 685 500 643H508L518 610H655L665 580 677 566H785L790 500 796 440 805 400 820 351V860H393z" fill="#0000fe" />
        <path d="M668 580L680 571H693l2 8 3-8h12l2 14 3-14h32l3 12 3-12h12l3 9 3-9h12l3 12 5-75 6-62 10-20 15-54" fill="none" stroke="#ff1010" strokeWidth="1.500" vectorEffect="non-scaling-stroke" />
        <path d="M393 828L402 780 412 740 420 725H481L490 685 500 643H508L518 610H655L665 580 677 566H785L790 500 796 440 805 400 820 351" fill="none" stroke="#000" strokeWidth="1.500" vectorEffect="non-scaling-stroke" />
      </g>
      <path d="M52.500 240V30.500H280.500V240" fill="none" stroke="#333" />
      <g fontSize="9" fill="#ff1010">
        <text x="135" y="80">Non-Financial</text>
        <text x="135" y="93">Investment-Grade</text>
        <text x="135" y="107">Corporate Bonds</text>
      </g>
      <path d="M204 70h33v14h-33z" fill="#fff" />
      <text x="216" y="80" fontSize="9" fill="#222">Total</text>
      <text x="159" y="45" fontSize="9" fill="#222">Target = GBP 895bn</text>
      <path d="M192 172h22v15h-22z" fill="#fff" />
      <text x="194" y="181" fontSize="9" fill="#2020ff">Gilts</text>
    </svg>
  );
}

function ToolDivider() {
  return <span className="h-4 w-px bg-[#222]" />;
}

function ResearchViewer() {
  return (
    <>
      <div className="flex h-[39px] shrink-0 items-center gap-[11px] bg-[#474747] pl-2 pr-1 text-[13px] text-white">
        <a href="#home" className="mr-auto flex h-[31px] w-[228px] items-center justify-center rounded-sm bg-[#ecbf08] text-[#222]">
          <MdHome className="size-[15px]" />
          Global Markets Research home
        </a>
        <button className="flex h-[31px] w-[107px] items-center justify-center rounded-sm border border-white">
          <svg viewBox="0 0 14 14" className="size-3.5" fill="none" stroke="currentColor" strokeWidth="1.500">
            <path d="M7 1v8M4 6l3 3 3-3M1 8v5h12V8" />
          </svg>
          Download
        </button>
        <button className="flex h-[31px] w-[103px] items-center justify-center rounded-sm border border-white">
          <svg viewBox="0 0 14 14" className="size-3.5" fill="none" stroke="currentColor" strokeWidth="1.500">
            <path d="M6 8L5 7c-1-1 0-2 0-2l4-4c1-1 3 0 4 1s0 2 0 3L10 8M8 6l1 1c1 1 0 2 0 2l-4 4c-1 1-3 0-4-1s0-2 0-3L4 6" />
          </svg>
          Copy Link
        </button>
      </div>
      <div className="relative flex h-[31px] shrink-0 items-center border-t border-t-[#3a3a3a] bg-[#454545] pl-3 pr-3 font-['Liberation_Sans',sans-serif] text-[12px] text-[#e2e2e2] shadow-[0_1px_0_#222]">
        <button aria-label="Toggle sidebar" className="mr-[48px]">
          <svg viewBox="0 0 14 14" className="size-3.5">
            <path d="M1 1h12v12H1z" fill="#333" stroke="#ddd" strokeWidth="1.500" />
            <path d="M3 3h2v8H3z" fill="#aaa" />
            <path d="M6 1v12" stroke="#ddd" />
          </svg>
        </button>
        <button aria-label="Find in document" className="mr-[18px]">
          <svg viewBox="0 0 14 14" className="size-3.5" fill="none" stroke="#ddd" strokeWidth="2">
            <circle cx="8.500" cy="5.500" r="4" />
            <path d="M6 8l-5 5" />
          </svg>
        </button>
        <button aria-label="Previous page" className="mr-2">
          <svg viewBox="0 0 14 14" className="size-3.5">
            <path d="M7 0l7 7h-4c0 3-1 6 2 7H7c-2-1-3-3-3-7H0z" fill="#ddd" />
          </svg>
        </button>
        <ToolDivider />
        <button aria-label="Next page" className="mx-2">
          <svg viewBox="0 0 14 14" className="size-3.5">
            <path d="M7 14l7-7h-4c0-3-1-6-5-7H2c2 1 2 4 2 7H0z" fill="#ddd" />
          </svg>
        </button>
        <input
          aria-label="Page"
          defaultValue="5"
          className="h-[21px] w-[53px] rounded-xs border border-[#2c2c2c] bg-[#555] pr-1 text-right"
        />
        <span className="ml-1">of 12</span>
        <div className="ml-[325px] flex items-center gap-2">
          <button aria-label="Zoom out" className="h-0.5 w-3 bg-[#ddd]" />
          <ToolDivider />
          <button aria-label="Zoom in">
            <svg viewBox="0 0 12 12" className="size-3">
              <path d="M6 0v12M0 6h12" stroke="#ddd" strokeWidth="2" />
            </svg>
          </button>
        </div>
        <div className="relative ml-3 flex items-center">
          <select aria-label="Zoom level" className="h-[22px] w-[118px] appearance-none rounded-xs border border-[#2c2c2c] bg-[#454545] pl-1.5">
            <option>Automatic Zoom</option>
          </select>
          <span className="pointer-events-none absolute right-1.5 flex flex-col gap-0.5">
            <Caret className="rotate-180" />
            <Caret />
          </span>
        </div>
        <div className="ml-auto flex items-center">
          <button aria-label="Presentation mode" className="mr-[18px]">
            <svg viewBox="0 0 14 14" className="size-[15px]" fill="#ddd">
              <path d="M0 0h5L3.500 1.500 6 4 4 6 1.500 3.500 0 5zM14 0v5l-1.500-1.500L10 6 8 4l2.500-2.500L9 0zM0 14V9l1.500 1.500L4 8l2 2-2.500 2.500L5 14zM14 14H9l1.500-1.500L8 10l2-2 2.500 2.500L14 9z" />
            </svg>
          </button>
          <button aria-label="Print" className="mr-[20px]">
            <svg viewBox="0 0 16 14" className="h-3.5 w-4" fill="#ddd">
              <path d="M3 0h9l1 1v4h1l2 2v5h-3v2H3v-2H0V7l2-2h1zM4.500 1.500V6h7V1.500zM4 9v3h8V9z" fillRule="evenodd" />
            </svg>
          </button>
          <button aria-label="Bookmark view" className="mr-[15px]">
            <svg viewBox="0 0 10 14" className="h-3.5 w-2.5" fill="#ddd">
              <path d="M1 0h8v14L5 10l-4 4z" />
            </svg>
          </button>
          <ToolDivider />
          <button aria-label="Tools" className="ml-[11px]">
            <svg viewBox="0 0 14 12" className="h-3 w-3.5" fill="none" stroke="#ddd" strokeWidth="2">
              <path d="M1 1l5 5-5 5M7 1l5 5-5 5" />
            </svg>
          </button>
        </div>
      </div>
      <div className="flex min-h-0 flex-1 overflow-hidden bg-[#464646] font-['Liberation_Sans',Arial,sans-serif]">
        <article className="ml-[162px] mr-[161px] flex min-w-0 flex-1 gap-[21px] overflow-hidden bg-white pl-[59px] shadow-[0_0_8px_3px_#1d1d1d]">
          <div className="w-[498px] shrink-0 whitespace-pre pt-4 text-[15px] leading-[18px] text-[#3c3c3c]">
            <p>
              GBP/USD can lift further over the next years.&nbsp; First, GBP/USD remains
              <br />
              undervalued on a range of measures.&nbsp; GBP/USD purchasing power parity
              <br />
              implied by relative GDP deflators is around 1.5500.
            </p>
            <p className="mt-[17px]">
              Second, the UK current account deficit is narrowing and is the smallest
              <br />
              since Q1 2012 (chart 17).&nbsp; This means GBP no longer needs to trade at a
              <br />
              significant discount to its fundamental equilibrium to attract foreign savings
              <br />
              and compensate foreign investors’ Brexit-related uncertainties.
            </p>
            <p className="mt-[17px]">
              Third, the Bank of England is unlikely to introduce additional easing
              <br />
              measures.&nbsp; Indeed, Bank of England Chief Economist Andy Haldane
              <br />
              suggested recently that the bank may need to normalize policy sooner
              <br />
              rather than later.&nbsp; According to Haldane “<i>the greater risk at present is of</i>
              <br />
              <i>central bank complacency allowing the inflationary (big) cat out of the bag</i>”.
              <br />
              The implication is UK interest rate expectations have room to adjust higher
              <br />
              in favour of GBP.
            </p>
            <ForecastTable />
            <p className="text-[13px] italic">Source: CBA, Bloomberg</p>
            <h2 className="mt-[14px] text-[18px] font-bold leading-5 text-[#2b3d73]">EUR</h2>
            <p className="mt-[14px]">Our EUR/USD forecasts are unchanged.&nbsp; We expect EUR/USD to trade</p>
          </div>
          <div className="w-[310px] shrink-0">
            <AccountChart />
            <h3 className="flex h-[16px] items-center gap-[14px] whitespace-pre text-[12px] font-bold text-black">
              <span className="w-[18px] font-normal text-[#333]">18.</span>
              BANK OF ENGLAND{"  "}ASSET PURCHASE FACILITY
            </h3>
            <FacilityChart />
          </div>
        </article>
        <div className="flex w-4 shrink-0 flex-col items-center bg-[#f0f0f0] text-[#444]">
          <Caret className="my-[7px] shrink-0 rotate-180" />
          <span className="flex-[174_1_0%]" />
          <span className="h-[17px] w-[13px] bg-[#c1c1c1]" />
          <span className="flex-[281_1_0%]" />
          <Caret className="my-[7px] shrink-0" />
        </div>
      </div>
    </>
  );
}

function DataWindow({ title, className, glow = false, children }: { title: string; className: string; glow?: boolean; children: React.ReactNode }) {
  return (
    <section className={"absolute flex flex-col rounded-md border border-[#a9c6f5] px-[5px] pb-[5px] shadow-[0_0_4px_#001a55] " + className}>
      <header className="relative flex h-[27px] shrink-0 items-start overflow-hidden">
        {glow && <span className="absolute left-10 top-2 h-10 w-24 rounded-full bg-[#fffbe6] opacity-90 blur-sm" />}
        <span className="relative mt-[6px] ml-1 h-3.5 w-[13px] border border-black bg-[linear-gradient(#222_2px,transparent_2px),linear-gradient(90deg,#c98e4b_3px,#222_3px)] bg-[size:100%_3px,4px_100%]" />
        <h2 className="relative ml-[7px] mr-auto mt-1 text-[12px] leading-[18px] text-black [text-shadow:0_0_6px_white,0_0_10px_white]">{title}</h2>
        <WindowButtons tone="aero" />
      </header>
      <div className="flex min-h-0 flex-1 flex-col overflow-hidden border border-[#8fb2ec] bg-black">
        <div className="flex h-[17px] shrink-0 items-center justify-end border-b border-[#444] pr-px">
          <svg viewBox="0 0 14 14" className="size-3.5" fill="none" stroke="#6c6c6c">
            <path d="M.5.500h13v13H.5zM3 4h3v3H3M8 3h4v8l-2-2-2 2zM6 7v4" />
          </svg>
        </div>
        <div className="flex-1" />
        {children}
      </div>
    </section>
  );
}

function DarkScroll({ thumb, rest }: { thumb: string; rest: string }) {
  return (
    <div className="flex h-[14px] shrink-0 items-stretch bg-[#0a0a05] text-[#ddd]">
      <button aria-label="Scroll left" className="flex w-[15px] items-center justify-center bg-[#2a2a2a]">
        <svg viewBox="0 0 6 8" className="h-2 w-1.5">
          <path d="M5 0L1 4l4 4" stroke="#ddd" strokeWidth="1.500" fill="none" />
        </svg>
      </button>
      <div className={"flex items-center justify-center border border-[#3a3a3a] bg-linear-to-b from-[#2c2c2c] to-[#1c1c1c] " + thumb}>
        <span className="h-2 w-[5px] border-x border-[#555] bg-[linear-gradient(90deg,transparent_1px,#555_1px,#555_2px,transparent_2px)]" />
      </div>
      <div className={rest} />
      <button aria-label="Scroll right" className="mr-[15px] flex w-[15px] items-center justify-center bg-[#2a2a2a]">
        <svg viewBox="0 0 6 8" className="h-2 w-1.5">
          <path d="M1 0l4 4-4 4" stroke="#ddd" strokeWidth="1.500" fill="none" />
        </svg>
      </button>
    </div>
  );
}

function DownArrow() {
  return (
    <svg viewBox="0 0 7 9" className="h-[9px] w-[7px] shrink-0">
      <path d="M2.500 0h2v5H7L3.500 9 0 5h2.500z" fill="#ff6a13" />
    </svg>
  );
}

function ScrollDown() {
  return (
    <button aria-label="Scroll down" className="ml-auto flex h-full w-[15px] shrink-0 items-center justify-center bg-[#2a2a2a]">
      <svg viewBox="0 0 8 6" className="h-1.5 w-2">
        <path d="M0 1l4 4 4-4" stroke="#ddd" strokeWidth="1.500" fill="none" />
      </svg>
    </button>
  );
}

function ScreenThree() {
  return (
    <section className={"relative min-w-0 overflow-hidden bg-black " + UI}>
      <div className="relative h-[742px] overflow-hidden bg-[linear-gradient(90deg,#0037b4,#0037b4_45%,#0853d6_53%,#0546c8_70%,#0037b4)]">
        <DataWindow
          title="World Markets"
          glow
          className="bottom-0 left-[19px] top-px w-[631px] bg-linear-to-r from-[#1c3f9e] via-[#1d4cb4] to-[#2f66cf]"
        >
          <div className="flex h-[16px] shrink-0 items-end overflow-hidden bg-[#141414] text-[11px] leading-[12px] text-[#a0a0a0]">
            <b className="ml-5 w-[108px] shrink-0">UK Natural Gas</b>
            <b className="w-[84px] shrink-0 text-[#ff6a13]">2.64490/5490</b>
            <DownArrow />
            <span className="ml-1 w-[49px] shrink-0 whitespace-nowrap text-[#ff6a13]">-0.08 %</span>
            <DownArrow />
            <span className="ml-2 w-[56px] shrink-0">-5.51570</span>
            <span className="w-[64px] shrink-0">-10.96410</span>
            <span className="w-[83px] shrink-0">2.91440</span>
            <span className="w-[94px] shrink-0 text-[#35a894]">5.13 %</span>
            <span className="w-[24px] shrink-0 overflow-hidden">37.18</span>
            <ScrollDown />
          </div>
          <DarkScroll thumb="flex-[518_1_0%]" rest="flex-[53_1_0%]" />
        </DataWindow>
        <DataWindow
          title="Quote List"
          className="bottom-0 right-[6px] top-px w-[556px] bg-linear-to-b from-[#5a92ee] via-[#3b76dc] to-[#2a5fc8]"
        >
          <div className="flex h-[18px] shrink-0 items-start overflow-hidden bg-[#0e0e0e] text-[11px] leading-[8px] text-[#a0a0a0]">
            <span className="ml-[37px] w-[67px] shrink-0">USD/NZD</span>
            <span className="w-[58px] shrink-0">1.39640</span>
            <span className="w-[67px] shrink-0">1.39740</span>
            <span className="w-[48px] shrink-0 text-[#35a894]">0.28%</span>
            <span className="mr-4 mt-1 size-[3px] shrink-0 bg-[#35a894]" />
            <span className="w-[62px] shrink-0">0.99080</span>
            <span className="w-[56px] shrink-0">0.83040</span>
            <span className="w-[65px] shrink-0">-0.92940</span>
            <span className="w-[44px] shrink-0 text-[#35a894]">0.54%</span>
            <ScrollDown />
          </div>
          <DarkScroll thumb="flex-[346_1_0%]" rest="flex-[150_1_0%]" />
        </DataWindow>

        <section className="absolute bottom-[37px] left-[7px] right-[3px] top-[46px] flex flex-col rounded-t-md border border-[#4b4c53] bg-[#84858f] px-[2px] pb-[3px]">
          <div className="relative flex h-[41px] shrink-0 items-end bg-linear-to-b from-[#8f919c] to-[#7b7d87] pl-2">
            <div className="flex flex-[227_1_0%]">
              <TabGroup tabs={researchTabs} active={4} />
            </div>
            <div className="flex flex-[889_1_0%]">
              <TabGroup tabs={researchTabsRest} active={-1} />
            </div>
            <div className="flex h-full w-[174px] justify-between pl-3.5">
              <button aria-label="New tab" className="mt-[18px] size-[15px] text-white">
                <svg viewBox="0 0 15 15" className="size-[15px]">
                  <path d="M7.500 2v11M2 7.500h11" stroke="currentColor" strokeWidth="2" />
                </svg>
              </button>
              <WindowButtons tone="gray" />
            </div>
          </div>
          <AddressBar value="#research" canBack>
            <span className="text-[#26272a]">commbankresearch.com.au</span>/apex/ResearchArticleViewV2?id=a0N4y00000hugZcEAI
          </AddressBar>
          <ResearchViewer />
        </section>
      </div>
    </section>
  );
}

export default function App() {
  return (
    <div className={"grid h-screen grid-cols-[1391fr_1391fr_1314fr] overflow-hidden bg-black " + UI}>
      <ScreenOne />
      <PaintWindow />
      <ScreenThree />
    </div>
  );
}
